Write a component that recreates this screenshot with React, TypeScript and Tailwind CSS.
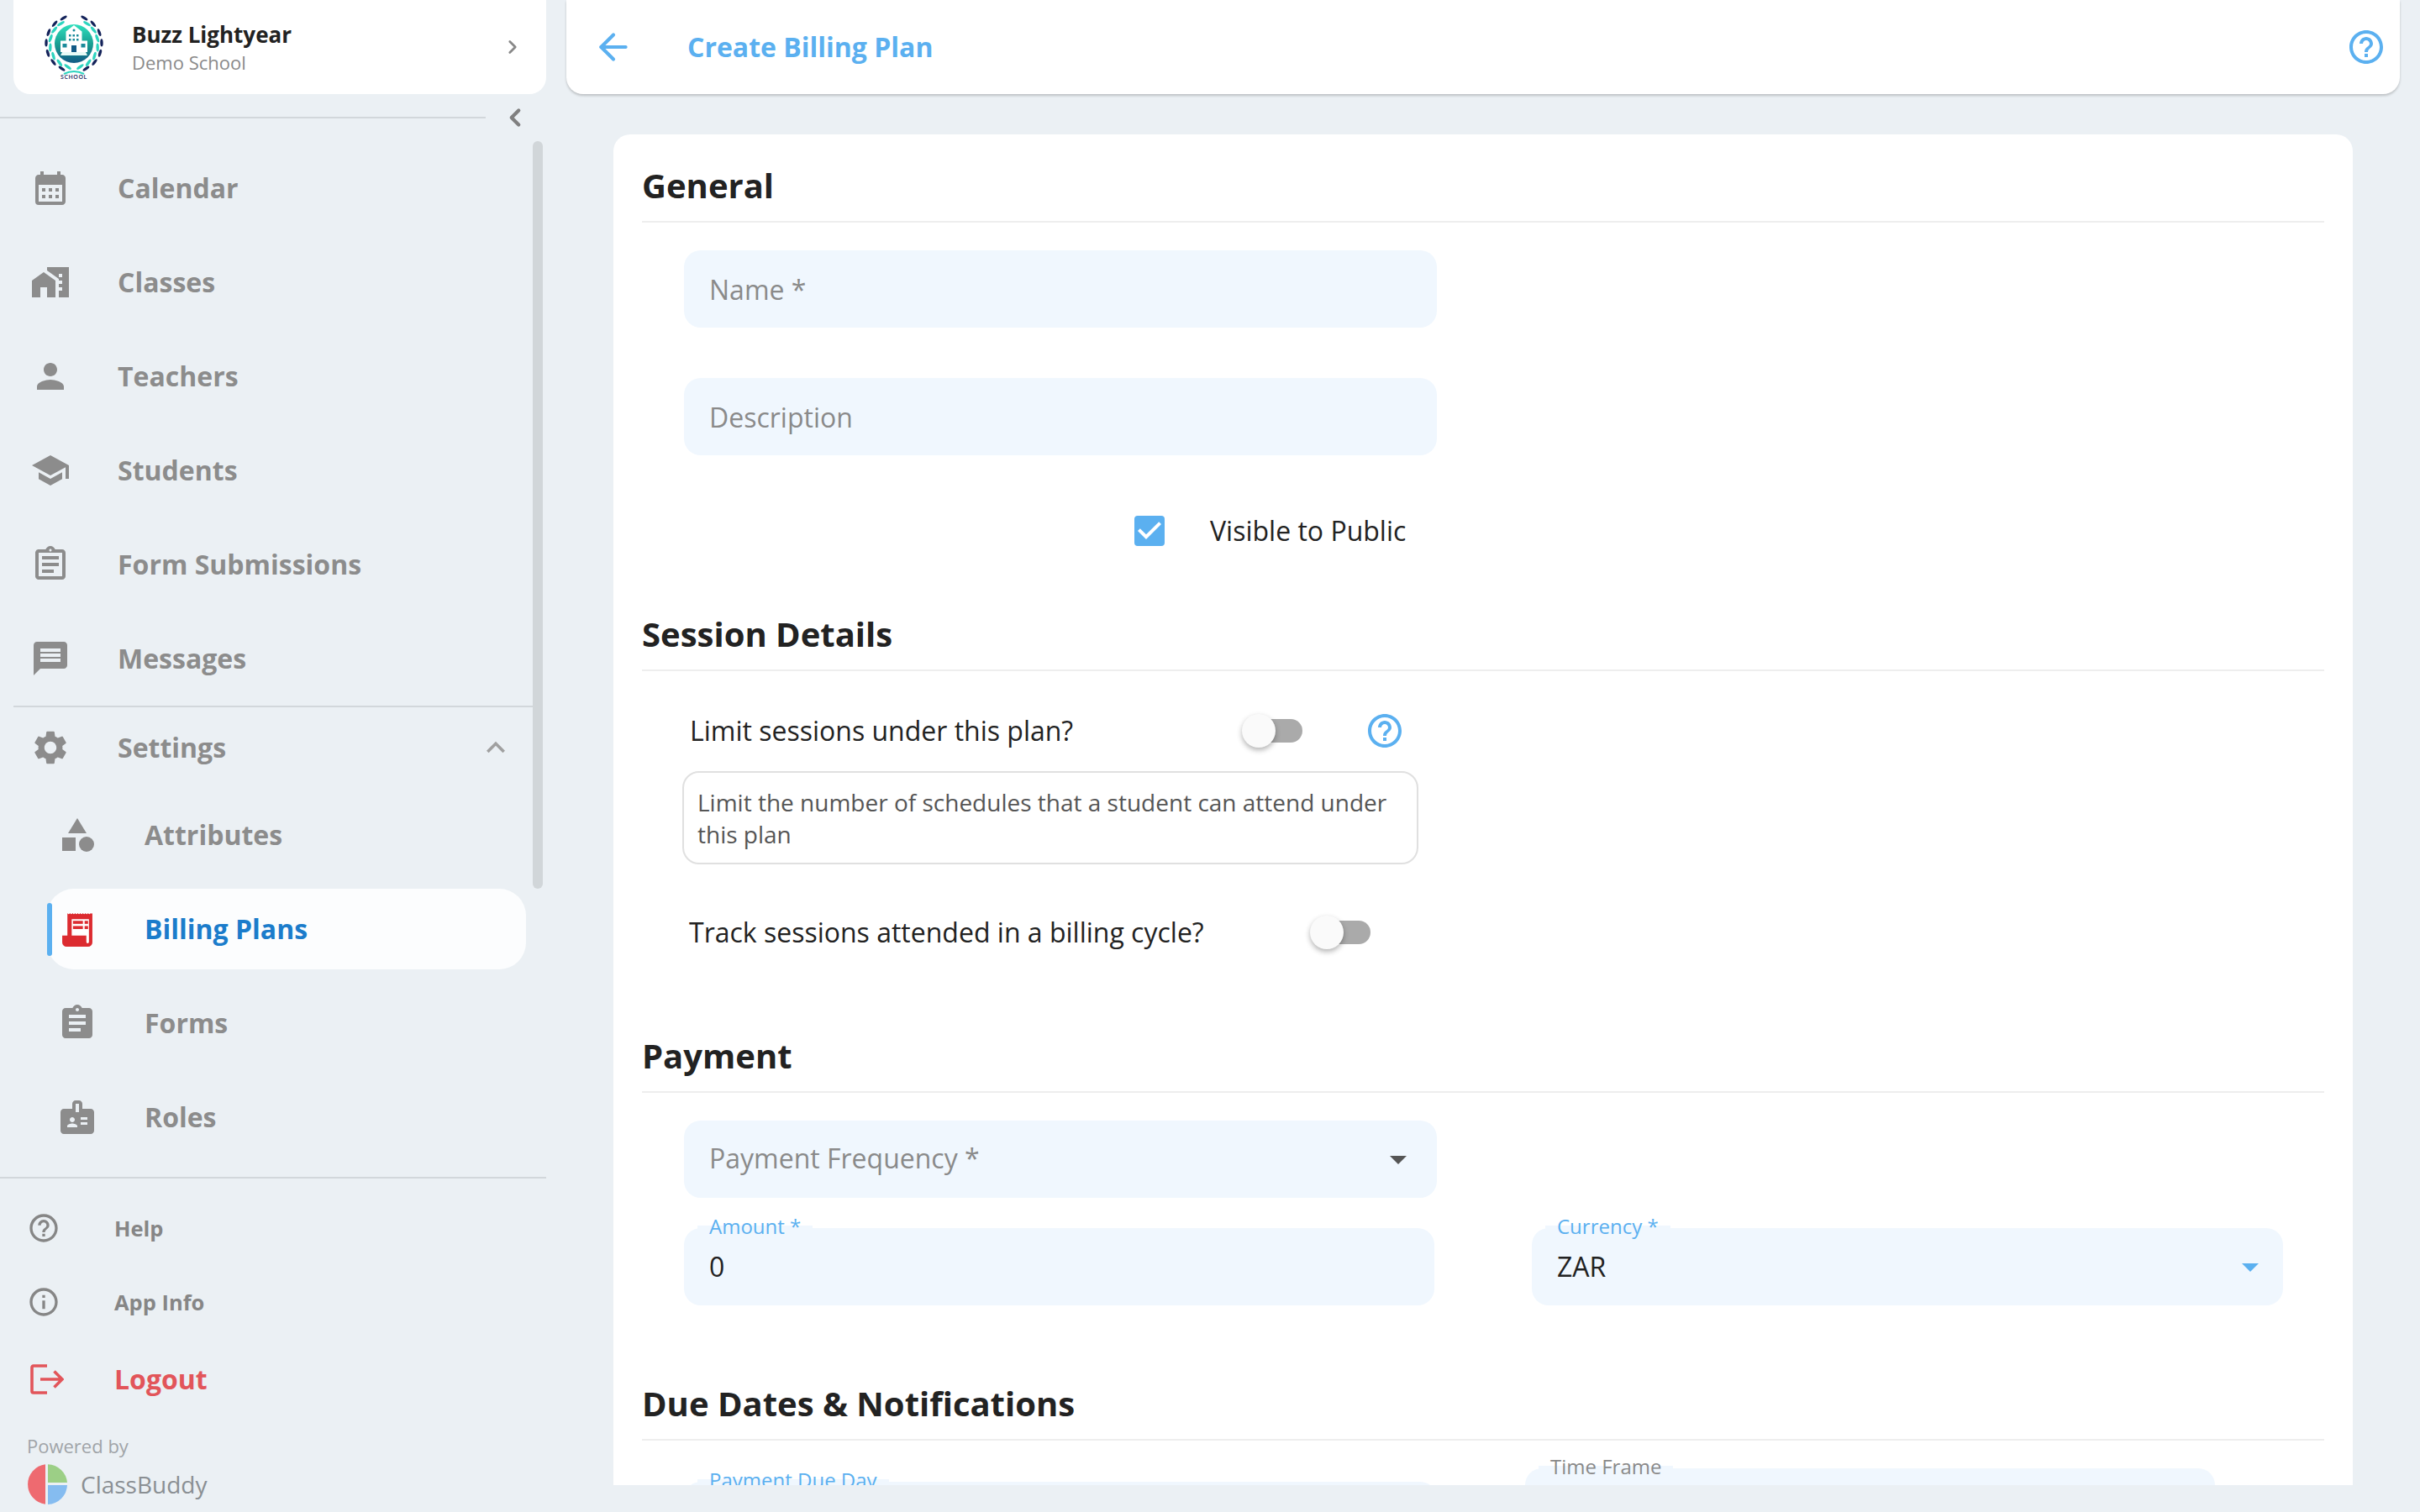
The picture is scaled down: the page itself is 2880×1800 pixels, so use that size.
import React from "react";
import {
  MdCalendarMonth,
  MdMapsHomeWork,
  MdPerson,
  MdSchool,
  MdOutlineAssignment,
  MdMessage,
  MdSettings,
  MdCategory,
  MdAssignment,
  MdBadge,
  MdHelpOutline,
  MdInfoOutline,
  MdCheckBox,
  MdArrowDropDown,
  MdKeyboardArrowUp,
} from "react-icons/md";
import { ChevronLeft, ChevronRight, ArrowLeft } from "lucide-react";

const leafAngles = [22, 44, 66, 88, 110, 132, 154];

const Laurel = ({ flip }: { flip?: boolean }) => (
  <g transform={flip ? "translate(72 0) scale(-1 1)" : undefined}>
    {leafAngles.map((a) => {
      const rad = (a * Math.PI) / 180;
      const x = 36 - 33 * Math.sin(rad);
      const y = 36 - 33 * Math.cos(rad);
      const rad2 = ((a + 11) * Math.PI) / 180;
      const x2 = 36 - 28.5 * Math.sin(rad2);
      const y2 = 36 - 28.5 * Math.cos(rad2);
      return (
        <g key={a}>
          <ellipse cx={x} cy={y} rx="1.7" ry="4.6" fill="#14235a" transform={`rotate(${(90 - a) * 0.85} ${x} ${y})`} />
          <ellipse cx={x2} cy={y2} rx="1.7" ry="5" fill="#2dd4bf" transform={`rotate(${(90 - a) * 0.85} ${x2} ${y2})`} />
        </g>
      );
    })}
  </g>
);

const SchoolLogo = () => (
  <svg width="72" height="82" viewBox="0 0 72 82" className="shrink-0">
    <defs>
      <linearGradient id="sg" x1="0" y1="0" x2="0" y2="1">
        <stop offset="0" stopColor="#2ee0bd" />
        <stop offset="0.55" stopColor="#18998f" />
        <stop offset="1" stopColor="#125a86" />
      </linearGradient>
    </defs>
    <g transform="translate(0 1)">
      <Laurel />
      <Laurel flip />
      <path d="M24 72q12 -6 24 0" stroke="#2dd4bf" strokeWidth="2" fill="none" />
      <circle cx="36" cy="36" r="23" fill="url(#sg)" />
      <path d="M36 14l9.500 7.500v11H52v13.500H20V32.500h6.500v-11z" fill="#fff" />
      <path d="M22 46h28l2 4H20z" fill="#e8fbf7" />
      <rect x="33" y="38" width="6" height="8" fill="#125a86" />
      {[30, 34.5, 39].map((x) => (
        <React.Fragment key={x}>
          <rect x={x} y="25" width="2.500" height="2.500" fill="#1a8a9a" />
          <rect x={x} y="30" width="2.500" height="2.500" fill="#1a8a9a" />
        </React.Fragment>
      ))}
      <rect x="22.500" y="36" width="5" height="4.500" fill="#1a8a9a" />
      <rect x="44.500" y="36" width="5" height="4.500" fill="#1a8a9a" />
      <circle cx="36" cy="20" r="1.500" fill="#1a8a9a" />
    </g>
    <text
      x="36"
      y="79"
      textAnchor="middle"
      fontSize="7"
      fontWeight="600"
      fontFamily="'Open Sans', sans-serif"
      letterSpacing="0.6"
      fill="#14235a"
    >
      SCHOOL
    </text>
  </svg>
);

const NavItem = ({ icon, label, sub }: { icon: React.ReactNode; label: string; sub?: boolean }) => (
  <div className={`flex h-[112px] items-center ${sub ? "pl-[72px]" : "pl-[40px]"}`}>
    <div className="flex w-[40px] items-center justify-center text-[#8c8c8c]">{icon}</div>
    <span className="ml-[60px] text-[32px] font-bold text-[#8c8c8c]">{label}</span>
  </div>
);

const ReceiptIcon = () => (
  <svg width="36" height="41" viewBox="0 0 35 40" className="shrink-0">
    <path
      d="M6 1q1.500 2.500 3 0q1.500 2.500 3 0q1.500 2.500 3 0q1.500 2.500 3 0q1.500 2.500 3 0q1.500 2.500 3 0q1.500 2.500 3 0q1.500 2.500 3 0q1.500 2.500 3 0q1 1.500 2 0V35a5 5 0 0 1-5 5H5a5 5 0 0 1-5-5V27h6z"
      fill="#dc2b30"
    />
    <path d="M11 8h20v26.500a1.500 1.500 0 0 1-3 0V27H11z" fill="#fff" />
    <rect x="12.500" y="10" width="11.500" height="3.500" fill="#dc2b30" />
    <rect x="12.500" y="16" width="11.500" height="3.500" fill="#dc2b30" />
    <rect x="26" y="10" width="4" height="3.500" fill="#dc2b30" />
    <rect x="26" y="16" width="4" height="3.500" fill="#dc2b30" />
  </svg>
);

const FootItem = ({ icon, label }: { icon: React.ReactNode; label: string }) => (
  <div className="flex h-[88px] items-center pl-[31px] text-[#868686]">
    <div className="flex w-[42px] items-center justify-center">{icon}</div>
    <span className="ml-[63px] text-[25.5px] font-bold">{label}</span>
  </div>
);

const Heading = ({ children, className = "" }: { children: React.ReactNode; className?: string }) => (
  <div className={`flex h-[88px] items-center border-b-2 border-[#eeeeee] pt-[2px] text-[40px] font-bold text-[#222222] ${className}`}>
    {children}
  </div>
);

const Field = ({
  placeholder,
  value,
  label,
  labelColor = "text-[#5bb0f0]",
  arrow,
  arrowClass = "",
  placeholderClass = "",
  className = "",
}: {
  placeholder?: string;
  value?: string;
  label?: string;
  labelColor?: string;
  arrow?: string;
  arrowClass?: string;
  placeholderClass?: string;
  className?: string;
}) => (
  <div className={`relative flex h-[92px] items-center justify-between rounded-[20px] bg-[#f0f7fe] pl-[30px] pr-[24px] ${className}`}>
    {label && (
      <div className={`absolute left-[16px] top-[-14px] px-[14px] text-[24px] leading-[24px] ${labelColor}`}>
        <div className="absolute inset-x-0 top-[11px] h-[6px] bg-[#f0f7fe]" />
        <span className="relative">{label}</span>
      </div>
    )}
    {placeholder && <span className={`text-[32px] text-[#8a8a8a] ${placeholderClass}`}>{placeholder}</span>}
    {value && <span className="text-[32px] text-[#222222]">{value}</span>}
    {arrow && <MdArrowDropDown size={48} color={arrow} className={`shrink-0 ${arrowClass}`} />}
  </div>
);

const Toggle = () => (
  <div className="relative h-[28px] w-[60px] shrink-0 rounded-full bg-[#aaaaaa]">
    <div className="absolute left-[-12px] top-[-6px] h-[40px] w-[40px] rounded-full bg-[#fafafa] shadow-[0_3px_6px_rgba(0,0,0,0.3)]" />
  </div>
);

const navIcon = "shrink-0";

export default function App() {
  return (
    <div className="flex h-[1800px] w-[2880px] overflow-hidden bg-[#ebf0f4] font-['Open_Sans',sans-serif]">
      <aside className="flex w-[674px] shrink-0 flex-col">
        <div className="ml-[16px] flex h-[112px] w-[634px] items-center rounded-b-[20px] bg-white pl-[36px] pr-[27px]">
          <SchoolLogo />
          <div className="ml-[33px] flex-1">
            <div className="text-[26px] font-bold leading-[36px] text-[#222222]">Buzz Lightyear</div>
            <div className="text-[22px] leading-[30px] text-[#8a8a8a]">Demo School</div>
          </div>
          <ChevronRight size={26} color="#888888" strokeWidth={2.5} />
        </div>
        <div className="relative mt-[27px] flex h-[2px] w-[578px] bg-[#d2d7db]">
          <ChevronLeft size={34} color="#808080" strokeWidth={3} className="absolute left-[596px] top-[-16px]" />
        </div>
        <div className="relative mt-[27px] h-[1233px] w-[650px]">
          <div className="absolute left-[634px] top-0 h-[890px] w-[12px] rounded-full bg-[#d1d6d9]" />
          <NavItem icon={<MdCalendarMonth size={48} className={navIcon} />} label="Calendar" />
          <NavItem icon={<MdMapsHomeWork size={48} className={navIcon} />} label="Classes" />
          <NavItem icon={<MdPerson size={48} className={navIcon} />} label="Teachers" />
          <NavItem icon={<MdSchool size={48} className={navIcon} />} label="Students" />
          <NavItem icon={<MdOutlineAssignment size={48} className={navIcon} />} label="Form Submissions" />
          <NavItem icon={<MdMessage size={48} className={navIcon} />} label="Messages" />
          <div className="ml-[16px] h-[2px] w-[618px] bg-[#d2d7db]" />
          <div className="flex h-[96px] items-center pl-[40px] pr-[38px]">
            <div className="flex w-[40px] items-center justify-center text-[#8c8c8c]">
              <MdSettings size={48} className={navIcon} />
            </div>
            <span className="ml-[60px] flex-1 text-[32px] font-bold text-[#8c8c8c]">Settings</span>
            <MdKeyboardArrowUp size={44} color="#a0a0a0" className="shrink-0" />
          </div>
          <NavItem sub icon={<MdCategory size={48} className={navIcon} />} label="Attributes" />
          <div className="relative my-[8px] ml-[56px] flex h-[96px] w-[570px] items-center rounded-[32px] bg-[#fcfdfe] pl-[16px]">
            <div className="absolute left-0 top-[17px] h-[63px] w-[6px] rounded-full bg-[#5bb0f0]" />
            <div className="flex w-[40px] items-center justify-center">
              <ReceiptIcon />
            </div>
            <span className="ml-[60px] text-[32px] font-bold text-[#1b7ccb]">Billing Plans</span>
          </div>
          <NavItem sub icon={<MdAssignment size={48} className={navIcon} />} label="Forms" />
          <NavItem sub icon={<MdBadge size={48} className={navIcon} />} label="Roles" />
        </div>
        <div className="h-[2px] w-[650px] bg-[#d2d7db]" />
        <div className="mt-[15px] flex flex-col">
          <FootItem icon={<MdHelpOutline size={40} className="shrink-0" />} label="Help" />
          <FootItem icon={<MdInfoOutline size={40} className="shrink-0" />} label="App Info" />
          <div className="flex h-[96px] items-center pl-[36px]">
            <svg width="40" height="36" viewBox="0 0 40 36" fill="none" stroke="#e2555a" strokeWidth="3.600" className="shrink-0">
              <path d="M20 2H3.800a1.800 1.800 0 0 0-1.800 1.800v28.400a1.800 1.800 0 0 0 1.800 1.800H20" />
              <path d="M12 18h26M28.500 8.500 38 18l-9.500 9.500" />
            </svg>
            <span className="ml-[60px] text-[32px] font-bold text-[#e2555a]">Logout</span>
          </div>
        </div>
        <div className="ml-[32px] mt-[16px] text-[22px] leading-[30px] text-[#a0a4a8]">Powered by</div>
        <div className="ml-[32px] mt-[7px] flex items-center">
          <svg width="48" height="48" viewBox="0 0 48 48" className="shrink-0">
            <path d="M22 0.2A24 24 0 0 0 22 47.8z" fill="#ee6a70" />
            <path d="M25 0.2A24 24 0 0 1 48 22H25z" fill="#9ccf86" />
            <path d="M25 25H48A24 24 0 0 1 25 48z" fill="#85bcf0" />
          </svg>
          <span className="ml-[16px] text-[28px] text-[#8a8f93]">ClassBuddy</span>
        </div>
      </aside>

      <main className="mr-[24px] flex min-w-0 flex-1 flex-col">
        <header className="flex h-[112px] shrink-0 items-center rounded-b-[20px] bg-white pl-[31px] pr-[16px] shadow-[0_2px_3px_rgba(0,0,0,0.2)]">
          <ArrowLeft size={50} color="#5bb0f0" strokeWidth={2} className="shrink-0" />
          <span className="ml-[63px] flex-1 text-[32px] font-bold text-[#5bb0f0]">Create Billing Plan</span>
          <MdHelpOutline size={48} color="#5bb0f0" className="shrink-0" />
        </header>
        <div className="mx-[56px] mt-[48px] h-[1608px] overflow-hidden rounded-t-[20px] bg-white px-[34px] pt-[17px]">
          <Heading>General</Heading>
          <Field placeholder="Name *" placeholderClass="pt-[2px]" className="ml-[50px] mt-[33px] w-[896px]" />
          <Field placeholder="Description" placeholderClass="pt-[2px]" className="ml-[50px] mt-[60px] w-[896px]" />
          <div className="mt-[72px] flex h-[36px] items-center pl-[580px]">
            <MdCheckBox size={48} color="#5bb0f0" className="shrink-0" />
            <span className="ml-[48px] text-[32px] text-[#222222]">Visible to Public</span>
          </div>

          <Heading className="mt-[61px]">Session Details</Heading>
          <div className="mt-[47px] flex h-[48px] items-center pl-[57px]">
            <span className="w-[669px] text-[32px] text-[#222222]">Limit sessions under this plan?</span>
            <Toggle />
            <MdHelpOutline size={48} color="#5bb0f0" className="ml-[74px] shrink-0" />
          </div>
          <div className="ml-[48px] mt-[24px] h-[111px] w-[876px] rounded-[20px] border-2 border-[#e0e0e0] px-[16px] py-[16px] text-[28px] leading-[38px] text-[#555555]">
            Limit the number of schedules that a student can attend under this plan
          </div>
          <div className="mt-[57px] flex h-[48px] items-center pl-[56px]">
            <span className="w-[751px] text-[32px] text-[#222222]">Track sessions attended in a billing cycle?</span>
            <Toggle />
          </div>

          <Heading className="mt-[79px]">Payment</Heading>
          <Field placeholder="Payment Frequency *" placeholderClass="pb-[2px]" arrow="#555555" arrowClass="-mr-[2px]" className="ml-[50px] mt-[33px] w-[896px]" />
          <div className="ml-[50px] mt-[36px] flex gap-[116px]">
            <Field value="0" label="Amount *" className="w-[893px]" />
            <Field value="ZAR" label="Currency *" arrow="#5bb0f0" arrowClass="-mr-[9px]" className="w-[894px]" />
          </div>

          <Heading className="mt-[73px]">Due Dates &amp; Notifications</Heading>
          <div className="ml-[50px] flex gap-[105px]">
            <Field label="Payment Due Day" className="mt-[49px] w-[896px]" />
            <Field label="Time Frame" labelColor="text-[#8a8a8a]" className="mt-[33px] w-[821px]" />
          </div>
        </div>
      </main>
    </div>
  );
}
